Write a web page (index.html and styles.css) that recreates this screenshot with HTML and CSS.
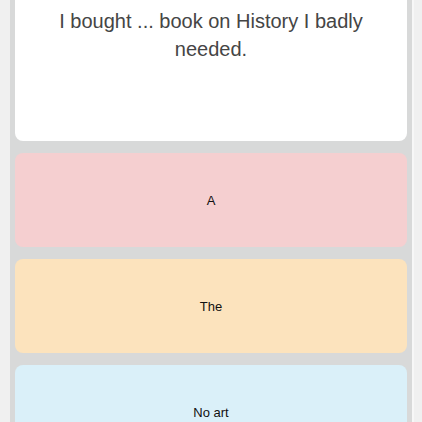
FILE: index.html
```html
<!DOCTYPE html>
<html lang="en">
<head>
  <meta charset="UTF-8">
  <title>Quiz</title>
  <link rel="stylesheet" href="styles.css">
</head>
<body>

<div class="quiz">
  <div class="question">I bought ... book on History I badly needed.</div>
  <div class="answers">
    <button class="answer pink">A</button>
    <button class="answer orange">The</button>
    <button class="answer blue">No art</button>
  </div>
</div>

</body>
</html>
```

FILE: styles.css
```css
body {
  margin: 0;
  background: #f0f0f0;
  font-family: "Liberation Sans", Arial, sans-serif;
}

.quiz {
  margin: 0 8px 0 10px;
  padding: 0 5px 12px;
  background: #d8d9d9;
  border-right: 2px solid #f7f7f7;
}

.question {
  background: white;
  color: #454545;
  font-size: 20px;
  line-height: 28px;
  text-align: center;
  padding: 7px 40px 78px;
  border-radius: 0 0 8px 8px;
}

.answers {
  display: flex;
  flex-direction: column;
  gap: 12px;
  margin-top: 12px;
}

.answer {
  height: 94px;
  border: none;
  border-radius: 8px;
  font-family: inherit;
  font-size: 13px;
  color: #111;
  cursor: pointer;
}

.pink { background: #f5cfd0; }
.orange { background: #fce3bd; }
.blue { background: #daf0f9; }
```
